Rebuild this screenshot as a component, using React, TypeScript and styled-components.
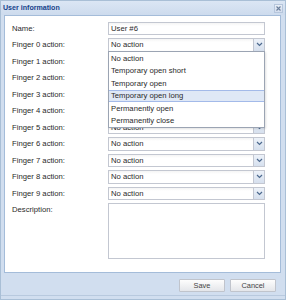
import React from "react";
import styled, { createGlobalStyle } from "styled-components";

const Global = createGlobalStyle`
  html, body { margin: 0; padding: 0; background: #ffffff; }
  * { box-sizing: border-box; }
`;

const FONT = `"Liberation Sans", Arial, sans-serif`;

const Win = styled.div`
  width: 286px;
  height: 300px;
  display: flex;
  flex-direction: column;
  background: #d1deef;
  border: 1px solid #a9bfd6;
  font-family: ${FONT};
  position: relative;
`;

const Header = styled.div`
  height: 14px;
  display: flex;
  align-items: center;
  justify-content: space-between;
  padding: 0 2px 0 2px;
  background: linear-gradient(#dbe6f4, #cddbed);
`;

const Title = styled.span`
  font-size: 7.1px;
  font-weight: bold;
  color: #15428b;
`;

const Close = styled.div`
  width: 9px;
  height: 9px;
  border: 1px solid #b6c6dc;
  background: linear-gradient(#e8eef7, #d3dded);
  display: flex;
  align-items: center;
  justify-content: center;
  margin-top: 1px;
`;

const Body = styled.div`
  height: 258px;
  margin: 0 4px 0 3px;
  background: #ffffff;
  border: 1px solid #a4bcd9;
  padding: 6px 15px 0 7px;
  display: flex;
  flex-direction: column;
  gap: 3px;
`;

const Row = styled.div`
  display: grid;
  grid-template-columns: 96px 157px;
  align-items: center;
  position: relative;
`;

const Label = styled.label<{ $top?: boolean }>`
  font-size: 7.7px;
  color: #2a2a2a;
  align-self: ${(p) => (p.$top ? "start" : "center")};
  padding-top: ${(p) => (p.$top ? "2px" : "0")};
`;

const TextInput = styled.div`
  height: 13px;
  border: 1px solid #c3c7d1;
  background: linear-gradient(#f4f4f4, #ffffff 3px);
  font-size: 7.7px;
  color: #2a2a2a;
  padding-left: 2px;
  display: flex;
  align-items: center;
`;

const Combo = styled.div`
  height: 13.5px;
  display: flex;
  border: 1px solid #c3c7d1;
  background: linear-gradient(#f4f4f4, #ffffff 3px);
`;

const ComboText = styled.div<{ $covered?: boolean }>`
  flex: 1;
  font-size: 7.7px;
  color: #2a2a2a;
  padding-left: 2px;
  display: flex;
  align-items: center;
  visibility: ${(p) => (p.$covered ? "hidden" : "visible")};
`;

const Trigger = styled.div`
  width: 11px;
  border-left: 1px solid #c3c7d1;
  background: linear-gradient(#edf2f9, #d6e0ee);
  display: flex;
  align-items: center;
  justify-content: center;
`;

const Area = styled.div`
  height: 56px;
  border: 1px solid #c3c7d1;
  background: #ffffff;
`;

const List = styled.div`
  position: absolute;
  left: 96px;
  top: 13px;
  width: 157px;
  height: 77px;
  border: 1px solid #9ba4b3;
  background: #ffffff;
  z-index: 5;
  display: flex;
  flex-direction: column;
  box-shadow: 1px 1px 2px rgba(0, 0, 0, 0.12);
`;

const Item = styled.div<{ $sel?: boolean }>`
  height: 12.5px;
  font-size: 7.7px;
  color: #2a2a2a;
  padding-left: 2px;
  display: flex;
  align-items: center;
  background: ${(p) => (p.$sel ? "#dfe8f6" : "transparent")};
  border-top: 1px solid ${(p) => (p.$sel ? "#a3bae9" : "transparent")};
  border-bottom: 1px solid ${(p) => (p.$sel ? "#a3bae9" : "transparent")};
`;

const Footer = styled.div`
  flex: 1;
  display: flex;
  justify-content: flex-end;
  align-items: flex-start;
  gap: 5px;
  padding: 6px 9px 0 0;
  border-bottom: 1px solid #b8c9de;
  margin-bottom: 3px;
`;

const Button = styled.button`
  width: 46px;
  height: 13px;
  border: 1px solid #c0c4cc;
  border-radius: 1px;
  background: linear-gradient(#fdfdfd, #e4e6ea);
  font-family: ${FONT};
  font-size: 7.4px;
  color: #444;
  padding: 0;
`;

const Arrow = () => (
  <svg width="7" height="5" viewBox="0 0 7 5">
    <path d="M1 1 L3.5 3.5 L6 1" stroke="#4d6a8f" strokeWidth="1.2" fill="none" />
  </svg>
);

const options = [
  "No action",
  "Temporary open short",
  "Temporary open",
  "Temporary open long",
  "Permanently open",
  "Permanently close",
];

export default function App() {
  return (
    <>
      <Global />
      <Win>
        <Header>
          <Title>User information</Title>
          <Close>
            <svg width="5" height="5" viewBox="0 0 5 5">
              <path d="M0.5 0.5 L4.5 4.5 M4.5 0.5 L0.5 4.5" stroke="#6a7f9c" strokeWidth="1.1" />
            </svg>
          </Close>
        </Header>
        <Body>
          <Row>
            <Label>Name:</Label>
            <TextInput>User #6</TextInput>
          </Row>
          {Array.from({ length: 10 }, (_, i) => (
            <Row key={i}>
              <Label>Finger {i} action:</Label>
              <Combo>
                <ComboText $covered={i >= 1 && i <= 4}>No action</ComboText>
                <Trigger>
                  <Arrow />
                </Trigger>
              </Combo>
              {i === 0 && (
                <List>
                  {options.map((o) => (
                    <Item key={o} $sel={o === "Temporary open long"}>
                      {o}
                    </Item>
                  ))}
                </List>
              )}
            </Row>
          ))}
          <Row>
            <Label $top>Description:</Label>
            <Area />
          </Row>
        </Body>
        <Footer>
          <Button>Save</Button>
          <Button>Cancel</Button>
        </Footer>
      </Win>
    </>
  );
}
